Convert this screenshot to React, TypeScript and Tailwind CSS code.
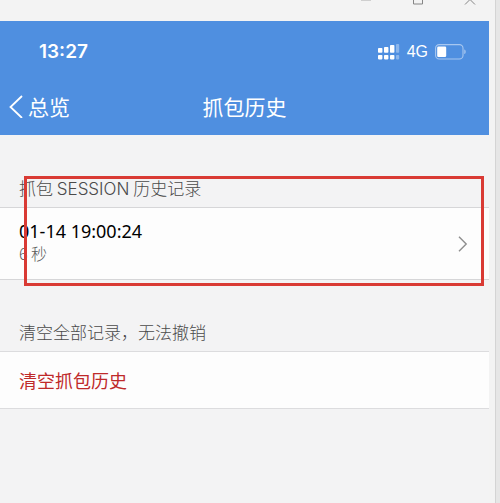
import React from 'react';

interface SessionRecord {
  id: string;
  time: string;
  duration: string;
}

const sessions: SessionRecord[] = [
  { id: 's1', time: '01-14 19:00:24', duration: '6 秒' },
];

const WindowBar: React.FC = () => (
  <div className="h-[21px] flex justify-end gap-[40px] pr-[19px] overflow-hidden text-[#858585]">
    <button type="button" aria-label="最小化" className="w-3 h-2">
      <svg viewBox="0 0 12 8" fill="none" stroke="#cfcfcf" className="w-3 h-2">
        <path d="M1 .5h10" />
      </svg>
    </button>
    <button type="button" aria-label="最大化" className="w-3 h-2">
      <svg viewBox="0 0 12 8" fill="none" stroke="currentColor" className="w-3 h-2">
        <path d="M1.5 -6v10h9v-10" />
      </svg>
    </button>
    <button type="button" aria-label="关闭" className="w-3 h-2">
      <svg viewBox="0 0 12 8" fill="none" stroke="currentColor" className="w-3 h-2">
        <path d="M1 4.5l10-10M11 4.5L1-5.5" />
      </svg>
    </button>
  </div>
);

const StatusBar: React.FC = () => (
  <div className="h-[62px] flex items-center justify-between pl-[39px] pr-[23px]">
    <span className="font-['Inter',sans-serif] text-[19px] leading-6 font-semibold">13:27</span>
    <div className="flex items-center gap-[7px]">
      {/* 双卡信号 */}
      <svg viewBox="0 0 22 16" fill="currentColor" className="w-[22px] h-4">
        <rect x="0" y="4" width="4.4" height="4.8" rx="0.8" />
        <rect x="6" y="3" width="4.4" height="5.8" rx="0.8" />
        <rect x="12" y="1" width="4.4" height="7.8" rx="0.8" />
        <rect x="18" y="0" width="3.2" height="8.8" rx="0.8" opacity="0.35" />
        <rect x="0" y="11" width="4.4" height="4.4" rx="0.8" />
        <rect x="6" y="11" width="4.4" height="4.4" rx="0.8" />
        <rect x="12" y="11" width="4.4" height="4.4" rx="0.8" />
        <rect x="18" y="11" width="3.2" height="4.4" rx="0.8" opacity="0.35" />
      </svg>
      <span className="font-['Liberation_Sans',sans-serif] text-[16px] leading-6">4G</span>
      <svg viewBox="0 0 31 16" fill="none" className="w-[31px] h-4">
        <rect x="0.6" y="0.6" width="27.4" height="14.4" rx="3.6" stroke="currentColor" strokeOpacity="0.5" strokeWidth="1.1" />
        <rect x="2.2" y="2.6" width="9" height="10.4" rx="1.2" fill="currentColor" />
        <path d="M29.4 5.5c1.6.5 1.6 4 0 4.6z" fill="currentColor" fillOpacity="0.6" />
      </svg>
    </div>
  </div>
);

const NavBar: React.FC = () => (
  <nav className="h-[52px] grid grid-cols-3 items-center pb-[6px] text-[21px] leading-6">
    <a href="#overview" className="flex items-center gap-1 pl-2">
      <svg viewBox="0 0 16 24" fill="none" stroke="currentColor" strokeWidth="1.8" className="w-4 h-6">
        <path d="M14 2L2.5 13L14 24" />
      </svg>
      总览
    </a>
    <h1 className="text-center">抓包历史</h1>
  </nav>
);

const App: React.FC = () => {
  return (
    <div className="min-h-screen flex bg-[#f3f3f3] font-['Noto_Sans_CJK_SC',sans-serif]">
      <div className="flex-1 flex flex-col">
        <WindowBar />

        <div className="mr-[6px] flex-1 bg-[#f3f3f4]">
          <header className="bg-[#4f8fe0] text-white">
            <StatusBar />
            <NavBar />
          </header>

          {/* 历史记录 */}
          <section className="relative mt-[41px]">
            <h2 className="h-[31px] pl-[19px] text-[17px] leading-6 font-light text-[#4a4a4a]">
              抓包 <span className="font-['Inter',sans-serif]">SESSION</span> 历史记录
            </h2>
            <ul className="border-y border-[#d6d6d8] bg-[#fdfdfd]">
              {sessions.map((item) => (
                <li key={item.id}>
                  <a href={`#${item.id}`} className="h-[71px] flex items-center justify-between pl-[19px] pr-[21px]">
                    <div className="pb-[5px]">
                      <div className="font-['Noto_Sans',sans-serif] text-[18px] leading-6 text-black">{item.time}</div>
                      <div className="text-[16px] leading-5 font-light text-[#5a5a5a]">{item.duration}</div>
                    </div>
                    <svg viewBox="0 0 10 16" fill="none" stroke="#8e8e8e" strokeWidth="1.4" className="w-[10px] h-4">
                      <path d="M1 .8L8.2 8L1 15.2" />
                    </svg>
                  </a>
                </li>
              ))}
            </ul>
            {/* 红色标注框 */}
            <div className="absolute top-0 -bottom-[6px] left-[24px] right-[5px] border-3 border-[#d93a34] pointer-events-none" />
          </section>

          {/* 清空 */}
          <section className="mt-[40px]">
            <h2 className="h-[31px] pl-[19px] text-[17px] leading-6 font-light text-[#4a4a4a]">
              清空全部记录，无法撤销
            </h2>
            <div className="border-y border-[#dcdcde] bg-[#fdfdfd]">
              <button type="button" className="w-full h-[56px] pl-[19px] text-left text-[18px] leading-6 text-[#bf2a2a]">
                清空抓包历史
              </button>
            </div>
          </section>
        </div>
      </div>
      <div className="w-[5px] border-l border-[#d4d4d4] bg-[#e6e6e6]" />
    </div>
  );
};

export default App;
